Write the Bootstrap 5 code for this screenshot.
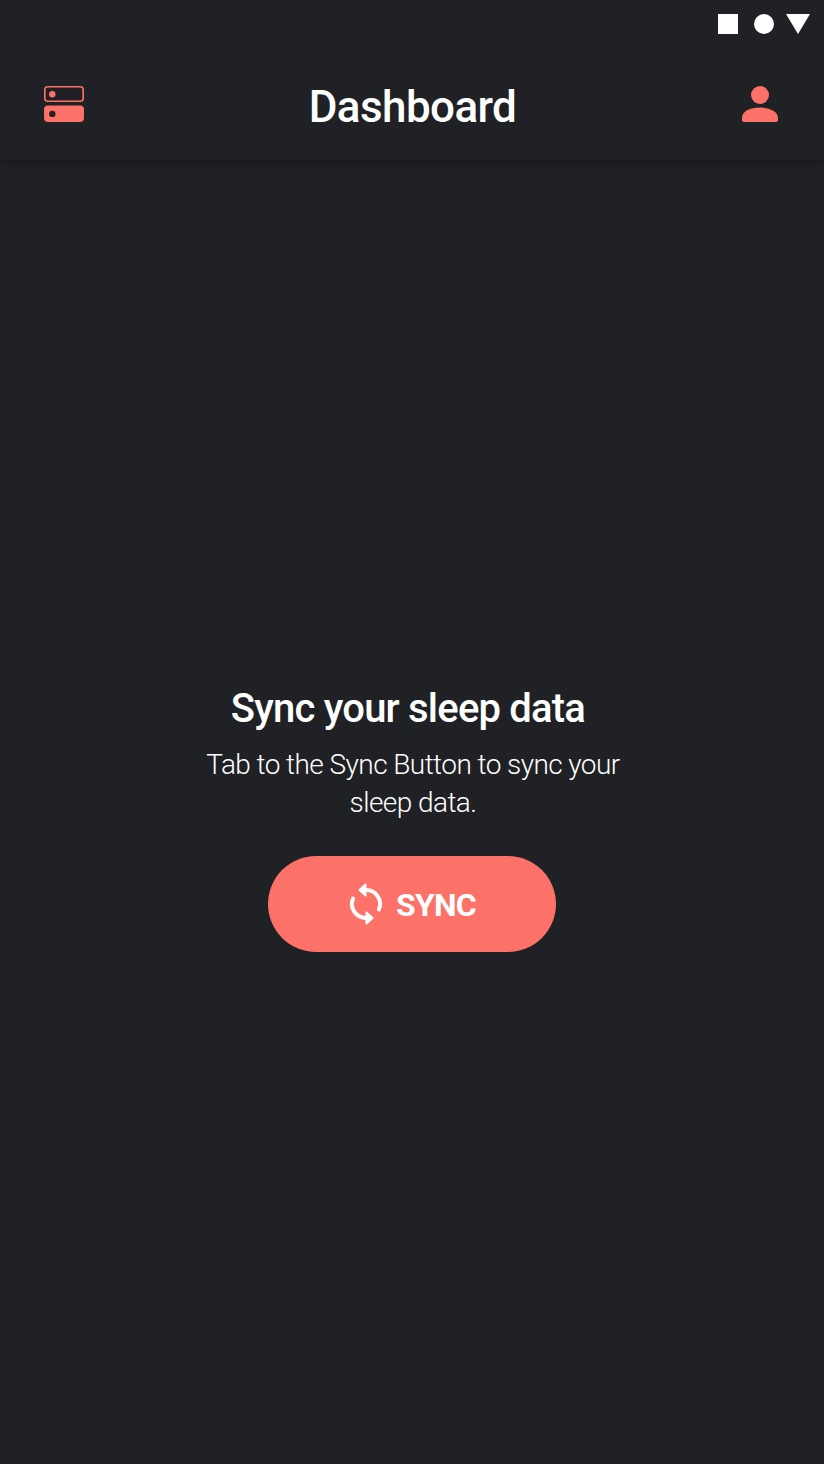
<!DOCTYPE html>
<html lang="en">
<head>
<meta charset="utf-8">
<meta name="viewport" content="width=device-width, initial-scale=1">
<title>Dashboard</title>
<link rel="stylesheet" href="https://cdn.jsdelivr.net/npm/bootstrap@5.3.0/dist/css/bootstrap.min.css">
<style>
  :root { --coral: #fc7268; --ink: #202125; }
  body { font-family: Roboto, "Liberation Sans", sans-serif; background: var(--ink); }
  svg { display: block; }
  .status-bar { height: 48px; padding-right: 14px; }
  .app-bar { height: 160px; background: var(--ink); box-shadow: 0 1px 8px rgba(0, 0, 0, .4); }
  .title-bar { height: 112px; padding: 0 40px; }
  .icon-btn { width: 48px; height: 48px; color: var(--coral); }
  .app-title { font-size: 44px; font-weight: 500; line-height: 52px; letter-spacing: -.6px; padding-top: 5px; padding-left: 1px; }
  .prompt { padding-top: 525px; }
  .prompt-title { font-size: 40px; font-weight: 500; line-height: 48px; letter-spacing: -.8px; padding-right: 8px; margin-bottom: 13px; }
  .prompt-text { font-size: 28px; font-weight: 300; line-height: 38px; letter-spacing: -.57px; width: 440px; padding-left: 2px; margin-bottom: 34px; }
  .sync-btn { --bs-btn-color: #fff; --bs-btn-bg: var(--coral); --bs-btn-hover-color: #fff; --bs-btn-hover-bg: #f5685e; width: 288px; height: 96px; gap: 10px; font-size: 32px; font-weight: 700; letter-spacing: -.7px; line-height: 40px; border: 0; }
  .sync-label { padding-top: 2px; padding-right: 2px; }
</style>
</head>
<body class="text-white vh-100 overflow-hidden d-flex flex-column">
  <header class="app-bar flex-shrink-0">
    <div class="status-bar d-flex justify-content-end align-items-center" aria-hidden="true">
      <svg width="92" height="20" viewBox="0 0 92 20" fill="#fff"><path d="M0 0h20v20H0z"/><circle cx="46" cy="10" r="10"/><path d="M68 0h24L80 20z"/></svg>
    </div>
    <nav class="title-bar d-flex justify-content-between align-items-center" aria-label="Main">
      <a class="icon-btn" href="#" aria-label="Devices">
        <svg width="48" height="48" viewBox="0 0 48 48" fill="none">
          <rect x="4.800" y="6.800" width="38.400" height="14.400" rx="3" stroke="currentColor" stroke-width="1.600"/>
          <circle cx="12.300" cy="14.200" r="3.200" fill="currentColor"/>
          <path fill="currentColor" fill-rule="evenodd" d="M8 25.500h32a4 4 0 0 1 4 4V38a4 4 0 0 1-4 4H8a4 4 0 0 1-4-4v-8.500a4 4 0 0 1 4-4zm4.300 5.200a3.200 3.200 0 1 0 0 6.400 3.200 3.200 0 0 0 0-6.400z"/>
        </svg>
      </a>
      <h1 class="app-title m-0">Dashboard</h1>
      <a class="icon-btn" href="#" aria-label="Profile">
        <svg width="48" height="48" viewBox="0 0 48 48" fill="currentColor"><circle cx="24" cy="15" r="9"/><path d="M6 38c0-6.500 8-10.400 18-10.400S42 31.500 42 38v2a2 2 0 0 1-2 2H8a2 2 0 0 1-2-2z"/></svg>
      </a>
    </nav>
  </header>
  <main class="prompt d-flex flex-column align-items-center text-center">
    <h2 class="prompt-title mt-0">Sync your sleep data</h2>
    <p class="prompt-text">Tab to the Sync Button to sync your sleep data.</p>
    <button class="btn sync-btn rounded-pill d-flex align-items-center justify-content-center" type="button">
      <svg width="40" height="48" viewBox="0 0 40 48" fill="none" stroke="#fff" stroke-width="4" stroke-linecap="round" aria-hidden="true">
        <path d="M20 10a14 14 0 0 1 12.900 19.500M7.100 18.500A14 14 0 0 0 20 38"/>
        <path d="M13.500 10l6-5.500v11zM26.500 38l-6-5.500v11z" fill="#fff" stroke-width="2" stroke-linejoin="round"/>
      </svg>
      <span class="sync-label">SYNC</span>
    </button>
  </main>
  <script src="https://cdn.jsdelivr.net/npm/bootstrap@5.3.0/dist/js/bootstrap.bundle.min.js"></script>
</body>
</html>
